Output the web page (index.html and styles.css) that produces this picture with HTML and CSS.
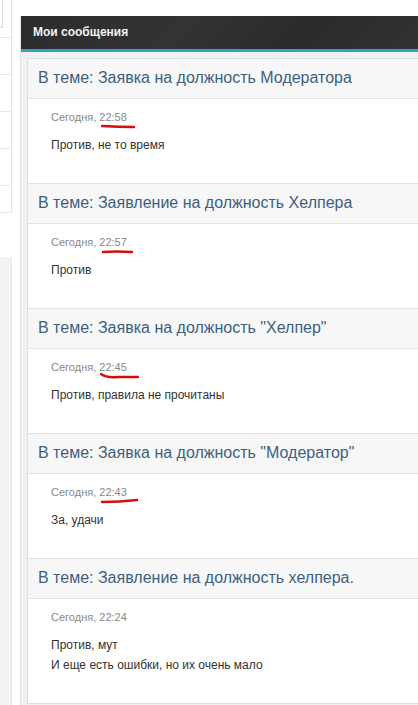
FILE: index.html
```html
<!DOCTYPE html>
<html lang="ru">
  <head>
    <meta charset="UTF-8" />
    <meta name="viewport" content="width=device-width, initial-scale=1.0" />
    <title>Мои сообщения</title>
    <link rel="stylesheet" href="styles.css">
  </head>
  <body>
    <div class="page">
      <aside class="sidebar">
        <div class="side-list">
          <div class="side-row side-top"><span class="side-input"></span></div>
          <div class="side-row"></div>
          <div class="side-row"></div>
          <div class="side-row"></div>
          <div class="side-row"></div>
          <div class="side-row side-last"></div>
        </div>
        <div class="side-box"></div>
      </aside>

      <section class="panel">
        <h3 class="panel-title">Мои сообщения</h3>
        <div class="panel-body">
          <div class="post-list">
            <div class="post">
              <div class="post-topic">В теме: Заявка на должность Модератора</div>
              <div class="post-content">
                <div class="post-date">
                  Сегодня, 22:58
                  <svg class="mark" width="44" height="10" viewBox="0 0 44 10"><path d="M2 5 Q18 6 34 6" /></svg>
                </div>
                <p>Против, не то время</p>
              </div>
            </div>
            <div class="post">
              <div class="post-topic">В теме: Заявление на должность Хелпера</div>
              <div class="post-content">
                <div class="post-date">
                  Сегодня, 22:57
                  <svg class="mark" width="44" height="10" viewBox="0 0 44 10"><path d="M3 6 Q16 5 32 6" /></svg>
                </div>
                <p>Против</p>
              </div>
            </div>
            <div class="post">
              <div class="post-topic">В теме: Заявка на должность "Хелпер"</div>
              <div class="post-content">
                <div class="post-date">
                  Сегодня, 22:45
                  <svg class="mark" width="44" height="10" viewBox="0 0 44 10"><path d="M1 3 Q6 7 18 6 L38 6" /></svg>
                </div>
                <p>Против, правила не прочитаны</p>
              </div>
            </div>
            <div class="post">
              <div class="post-topic">В теме: Заявка на должность "Модератор"</div>
              <div class="post-content">
                <div class="post-date">
                  Сегодня, 22:43
                  <svg class="mark" width="44" height="10" viewBox="0 0 44 10"><path d="M2 6 Q20 6 37 4" /></svg>
                </div>
                <p>За, удачи</p>
              </div>
            </div>
            <div class="post">
              <div class="post-topic">В теме: Заявление на должность хелпера.</div>
              <div class="post-content">
                <div class="post-date">Сегодня, 22:24</div>
                <p>Против, мут<br />И еще есть ошибки, но их очень мало</p>
              </div>
            </div>
          </div>
        </div>
      </section>
    </div>
  </body>
</html>
```

FILE: styles.css
```css
body {
  margin: 0;
  background: #fff;
  font-family: "Liberation Sans", Arial, sans-serif;
  overflow: hidden;
}

.page {
  display: flex;
  gap: 8px;
  height: 705px;
}

/* left sidebar, mostly cut off */
.sidebar {
  width: 12px;
  flex-shrink: 0;
  display: flex;
  flex-direction: column;
}

.side-list {
  border-right: 1px solid #e4e4e4;
  border-bottom: 1px solid #e8e8e8;
}

.side-row {
  height: 36px;
  border-bottom: 1px solid #e8e8e8;
}

.side-top {
  height: 37px;
}

.side-input {
  display: block;
  width: 2px;
  height: 27px;
  border-right: 1px solid #dcdcdc;
  border-bottom: 1px solid #dcdcdc;
}

.side-last {
  height: 26px;
  border-bottom: none;
}

.side-box {
  margin-top: 44px;
  flex: 1;
  background: #f3f3f3;
  border-right: 1px solid #e6e6e6;
}

/* messages panel, runs on past the right edge */
.panel {
  margin-top: 16px;
  flex: 1;
  min-width: 0;
  background: #f1f1f1;
  border-left: 1px solid #e2e2e2;
}

.panel-title {
  margin: 0;
  height: 33px;
  line-height: 33px;
  padding-left: 12px;
  font-size: 12px;
  font-weight: bold;
  color: #f2f2f2;
  background: linear-gradient(135deg, #2c2c2c 0%, #333 40%, #2b2b2b 70%, #323232 100%);
  border-bottom: 3px solid #2aa8b8;
}

.panel-body {
  padding: 6px 0 0 6px;
}

.post-list {
  background: #fff;
  border: 1px solid #dedede;
  border-right: none;
}

.post {
  border-bottom: 1px solid #e2e2e2;
}

.post:last-child {
  border-bottom: none;
}

.post-topic {
  height: 39px;
  line-height: 38px;
  padding-left: 10px;
  font-size: 16px;
  color: #3e5f80;
  background: #f7f7f7;
  border-bottom: 1px solid #e4e4e4;
  white-space: nowrap;
  overflow: hidden;
}

.post-content {
  box-sizing: border-box;
  min-height: 84px;
  padding: 11px 23px 28px;
}

.post-date {
  position: relative;
  font-size: 11px;
  line-height: 14px;
  color: #888;
}

.mark {
  position: absolute;
  left: 49px;
  top: 11px;
}

.mark path {
  fill: none;
  stroke: #d40d0d;
  stroke-width: 2.4;
  stroke-linecap: round;
}

.post-content p {
  margin: 11px 0 0;
  font-size: 12px;
  line-height: 20px;
  color: #333;
}
```
